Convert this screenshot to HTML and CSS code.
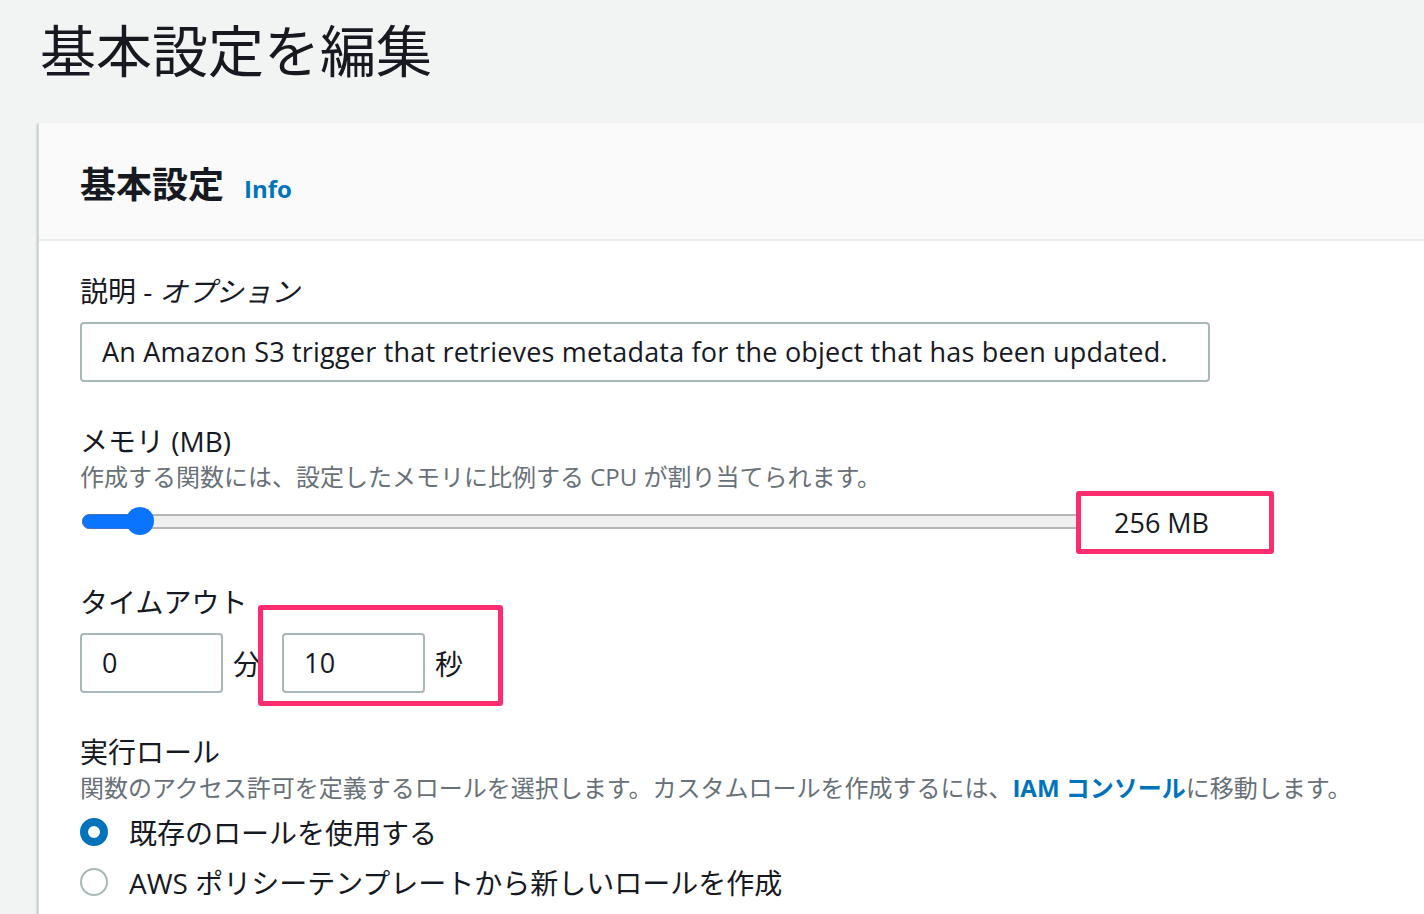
FILE: index.html
```html
<!DOCTYPE html>
<html lang="ja">
<head>
    <meta charset="utf-8">
    <title>基本設定を編集</title>
    <link rel="stylesheet" href="styles.css">
</head>
<body>
    <h1 class="page-title">基本設定を編集</h1>

    <div class="panel">
        <div class="panel-header">
            <h2>基本設定</h2>
            <a class="info-link" href="#">Info</a>
        </div>

        <div class="panel-body">
            <div class="field description-field">
                <div class="field-label">説明 - <i>オプション</i></div>
                <div class="text-input wide">An Amazon S3 trigger that retrieves metadata for the object that has been updated.</div>
            </div>

            <div class="field memory-field">
                <div class="field-label">メモリ (MB)</div>
                <div class="field-desc">作成する関数には、設定したメモリに比例する CPU が割り当てられます。</div>
                <div class="slider-row">
                    <div class="slider">
                        <div class="slider-track"></div>
                        <div class="slider-fill"></div>
                        <div class="slider-thumb"></div>
                    </div>
                    <div class="memory-value">256 MB</div>
                </div>
            </div>

            <div class="field timeout-field">
                <div class="field-label">タイムアウト</div>
                <div class="timeout-row">
                    <div class="text-input small">0</div>
                    <span class="unit">分</span>
                    <div class="text-input small">10</div>
                    <span class="unit">秒</span>
                    <div class="highlight-box"></div>
                </div>
            </div>

            <div class="field">
                <div class="field-label">実行ロール</div>
                <div class="field-desc">関数のアクセス許可を定義するロールを選択します。カスタムロールを作成するには、<a href="#">IAM コンソール</a>に移動します。</div>
                <div class="radio-group">
                    <label class="radio-item"><span class="radio checked"></span>既存のロールを使用する</label>
                    <label class="radio-item"><span class="radio"></span>AWS ポリシーテンプレートから新しいロールを作成</label>
                </div>
            </div>
        </div>
    </div>
</body>
</html>
```

FILE: styles.css
```css
html, body {
    margin: 0;
    padding: 0;
}

body {
    background-color: #f2f3f3;
    color: #16191f;
    font-family: "Open Sans", "Noto Sans CJK JP", sans-serif;
    overflow: hidden;
    height: 914px;
}

.page-title {
    margin: 0;
    padding: 18px 0 0 40px;
    height: 105px;
    box-sizing: border-box;
    font-size: 56px;
    font-weight: 400;
    line-height: 64px;
}

.panel {
    margin-left: 38px;
    width: 1500px;
    height: 800px;
    background-color: #ffffff;
    border-left: 1px solid #d5dbdb;
    box-shadow: -1px 1px 2px rgba(0, 28, 36, 0.25);
    margin-top: 18px;
}

.panel-header {
    display: flex;
    align-items: baseline;
    height: 118px;
    box-sizing: border-box;
    padding: 40px 0 0 41px;
    background-color: #fafafa;
    border-bottom: 2px solid #eaeded;
}

.panel-header h2 {
    margin: 0;
    font-size: 36px;
    font-weight: 700;
    line-height: 44px;
}

.info-link {
    margin-left: 20px;
    font-size: 24px;
    font-weight: 700;
    color: #0073bb;
    text-decoration: none;
}

.panel-body {
    padding: 30px 0 0 41px;
}

.field {
    margin-bottom: 28px;
}

.description-field {
    margin-bottom: 39px;
}

.timeout-field {
    margin-bottom: 39px;
}

.field-label {
    font-size: 28px;
    line-height: 40px;
}

.field-label i {
    font-style: oblique;
}

.field-desc {
    font-size: 24px;
    line-height: 32px;
    color: #687078;
}

.field-desc a {
    color: #0073bb;
    font-weight: 700;
    text-decoration: none;
}

.text-input {
    box-sizing: border-box;
    height: 60px;
    border: 2px solid #aab7b8;
    border-radius: 4px;
    background: #fff;
    font-size: 27px;
    letter-spacing: 0.2px;
    line-height: 56px;
    padding-left: 20px;
}

.text-input.wide {
    width: 1130px;
    margin-top: 11px;
}

.text-input.small {
    width: 143px;
}

/* memory slider */
.slider-row {
    display: flex;
    align-items: center;
    margin-top: -2px;
}

.slider {
    position: relative;
    width: 994px;
    height: 62px;
    margin-left: 2px;
}

.slider-track {
    position: absolute;
    left: 0;
    right: 0;
    top: 22px;
    height: 15px;
    box-sizing: border-box;
    border: 2px solid #b5b5b5;
    border-right: none;
    border-radius: 8px 0 0 8px;
    background: #efefef;
}

.slider-fill {
    position: absolute;
    left: 0;
    top: 22px;
    width: 60px;
    height: 15px;
    box-sizing: border-box;
    border: 1px solid #3d6fc4;
    border-radius: 8px;
    background: #0a74ff;
}

.slider-thumb {
    position: absolute;
    left: 44px;
    top: 15px;
    width: 28px;
    height: 28px;
    border-radius: 50%;
    background: #0a74ff;
}

.memory-value {
    box-sizing: border-box;
    width: 198px;
    height: 63px;
    border: 5px solid #ff2d6d;
    border-radius: 3px;
    font-size: 27px;
    line-height: 53px;
    padding-left: 33px;
}

/* timeout */
.timeout-row {
    position: relative;
    display: flex;
    align-items: center;
    margin-top: 11px;
}

.unit {
    font-size: 28px;
    margin: 0 21px 0 10px;
}

.highlight-box {
    position: absolute;
    left: 178px;
    top: -28px;
    width: 245px;
    height: 101px;
    box-sizing: border-box;
    border: 5px solid #ff2d6d;
    border-radius: 3px;
}

/* execution role */
.radio-group {
    margin-top: 3px;
}

.radio-item {
    display: flex;
    align-items: center;
    height: 50px;
    font-size: 28px;
}

.radio {
    box-sizing: border-box;
    width: 28px;
    height: 28px;
    border-radius: 50%;
    border: 2px solid #aab7b8;
    margin-right: 21px;
}

.radio.checked {
    border: 8px solid #0073bb;
}
```
